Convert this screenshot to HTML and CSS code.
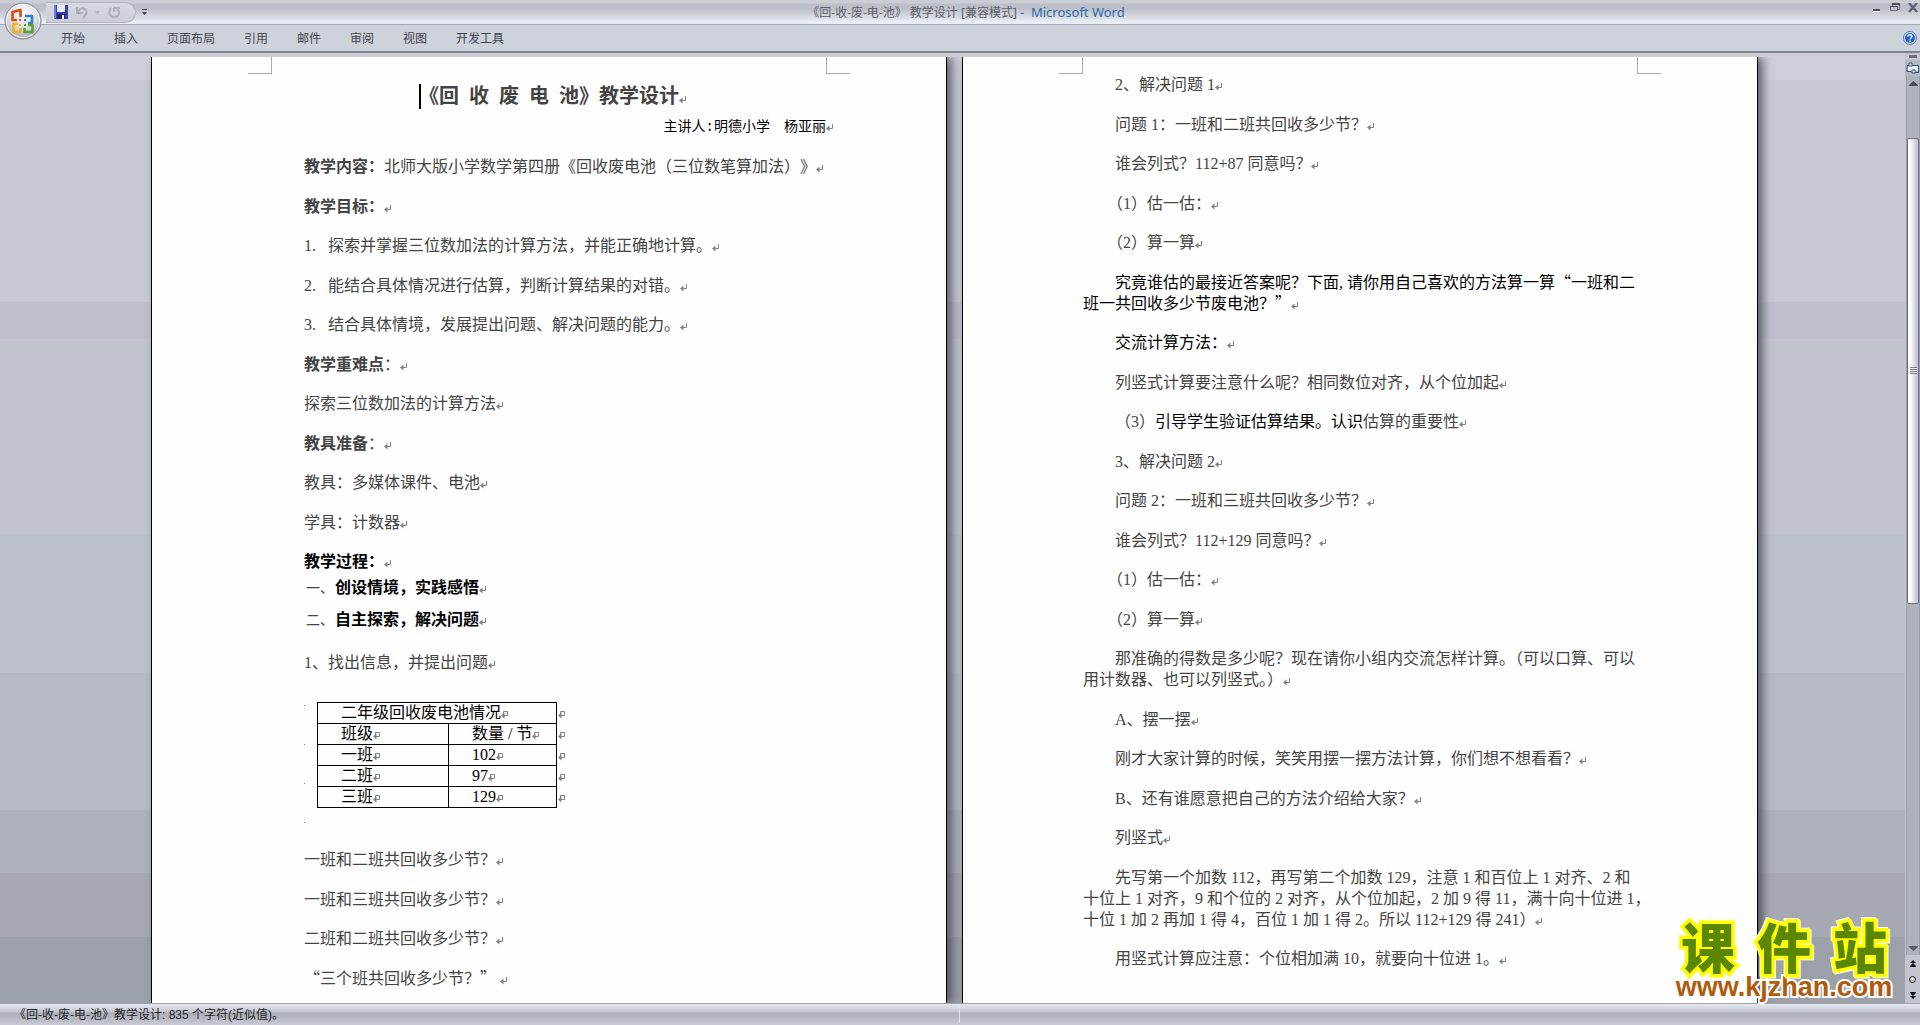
FILE: index.html
```html
<!DOCTYPE html>
<html lang="zh-CN">
<head>
<meta charset="utf-8">
<title>《回-收-废-电-池》教学设计 - Microsoft Word</title>
<link rel="stylesheet" href="styles.css">
</head>
<body>
<svg class="defs" width="0" height="0" aria-hidden="true">
  <symbol id="ret" viewBox="0 0 8 8"><path d="M6.5 0v4.5H2" fill="none" stroke="#808080"/><path d="M0 4.5L3.5 1.5v6z" fill="#808080"/></symbol>
  <symbol id="cell" viewBox="0 0 8 8"><path d="M2.5 3V.5h4v4H3" fill="none" stroke="#808080"/><path d="M0 4.5L3.5 1.5v6z" fill="#808080"/></symbol>
</svg>

<header class="titlebar">
  <div class="quick">
    <div class="pill">
      <button class="ico" aria-label="保存"><svg width="14" height="14" viewBox="0 0 14 14"><path d="M0 0h14v14H1L0 13z" fill="#3a3fae"/><path d="M0 0h2v13H0z" fill="#6f78dc"/><path d="M3 0h8v7H3z" fill="#e8ecfa"/><path d="M3 9h8v5H3z" fill="#20246e"/><path d="M8 10h2v4H8z" fill="#fff"/></svg></button>
      <button class="ico undo" aria-label="撤消"><svg width="13" height="13" viewBox="0 0 13 13"><path d="M1 1v6h6M2 6c2-4 5-4 7-3 3 2 1 6-2 9" fill="none" stroke="#a9aebb" stroke-width="2"/></svg></button>
      <button class="ico caret" aria-label="撤消列表"><svg width="5" height="3" viewBox="0 0 5 3"><path d="M0 0h5L2.500 3z" fill="#a9aebb"/></svg></button>
      <button class="ico" aria-label="重复"><svg width="13" height="13" viewBox="0 0 13 13"><path d="M3 2C0 5 1 11 6 11s7-5 3-8M6 6V2h6" fill="none" stroke="#a9aebb" stroke-width="2"/></svg></button>
    </div>
    <button class="ico" aria-label="自定义快速访问工具栏"><svg width="5" height="6" viewBox="0 0 5 6"><path d="M0 0h5v1H0zM0 3h5L2.500 6z" fill="#3c4048"/></svg></button>
  </div>
  <h1 class="caption">《回-收-废-电-池》&nbsp;教学设计 [兼容模式] <span>- &nbsp;Microsoft Word</span></h1>
  <div class="window-buttons">
    <button class="ico" aria-label="最小化"><svg width="10" height="10" viewBox="0 0 10 10"><path d="M1 6h7v2H1z" fill="#4a4e58"/><path d="M1 8h7v1H1z" fill="#fff"/></svg></button>
    <button class="ico" aria-label="还原"><svg width="10" height="10" viewBox="0 0 10 10"><path d="M2.500 3V1.500h7v5H8M.5 3.500h7v4h-7z" fill="none" stroke="#687088"/><path d="M2 0h8v2H2zM0 3h8v1H0z" fill="#4a4e58"/></svg></button>
    <button class="ico" aria-label="关闭"><svg width="10" height="10" viewBox="0 0 10 10"><path d="M1 0l8 9M9 0L1 9" stroke="#5b6275" stroke-width="2.400"/></svg></button>
  </div>
  <button class="office" aria-label="Office 按钮"><svg width="38" height="38" viewBox="0 0 38 38">
    <defs><radialGradient id="orb" cx=".5" cy=".3" r=".7"><stop offset="0" stop-color="#fff"/><stop offset=".6" stop-color="#d9dbe0"/><stop offset="1" stop-color="#a3a7b0"/></radialGradient></defs>
    <circle cx="19" cy="19" r="18" fill="url(#orb)" stroke="#858a94"/><circle cx="19" cy="19" r="16.500" fill="none" stroke="#f6f7f9"/>
    <g fill="none" stroke-width="2.600" stroke-linejoin="round">
      <path d="M13 18H8.500V10l8-2v7" stroke="#dc4a12"/><path d="M21 14h7v7h-4" stroke="#2f7fc4"/>
      <path d="M14 22H9.500v8h7v-4" stroke="#f2b21c"/><path d="M24 23h4.500v7h-8v-4" stroke="#5aa32e"/></g>
    <path d="M15 17h2v2h-2z" fill="#dc4a12"/><path d="M20 17h2v2h-2z" fill="#2f7fc4"/><path d="M15 22h2v2h-2z" fill="#f2b21c"/><path d="M20 22h2v2h-2z" fill="#5aa32e"/>
  </svg></button>
</header>

<nav class="tabs">
  <button>开始</button><button>插入</button><button>页面布局</button><button>引用</button><button>邮件</button><button>审阅</button><button>视图</button><button>开发工具</button>
  <button class="help" aria-label="帮助"><svg width="14" height="14" viewBox="0 0 14 14"><circle cx="7" cy="7" r="6.500" fill="#dbe9fa" stroke="#4a78b4"/><circle cx="7" cy="7" r="5" fill="#1f5fd8"/><path d="M5 5.500c0-2.500 4-2.500 4 0C9 7 7 7 7 8.500M7 9.500V11" fill="none" stroke="#fff" stroke-width="1.500"/></svg></button>
</nav>

<main class="workspace">
  <div class="desk">
    <article class="page">
      <i class="crop left"></i><i class="crop right"></i>
      <h2 class="doc-title"><span class="cursor"></span>《回&nbsp; 收&nbsp; 废&nbsp; 电&nbsp; 池》教学设计<svg class="mark"><use href="#ret"/></svg></h2>
      <p class="author">主讲人:明德小学　杨亚丽<svg class="mark"><use href="#ret"/></svg></p>
      <div class="body intro">
        <p><b>教学内容：</b>北师大版小学数学第四册《回收废电池（三位数笔算加法）》<svg class="mark"><use href="#ret"/></svg></p>
        <p><b>教学目标：</b><svg class="mark"><use href="#ret"/></svg></p>
        <p><span class="num">1.</span>探索并掌握三位数加法的计算方法，并能正确地计算。<svg class="mark"><use href="#ret"/></svg></p>
        <p><span class="num">2.</span>能结合具体情况进行估算，判断计算结果的对错。<svg class="mark"><use href="#ret"/></svg></p>
        <p><span class="num">3.</span>结合具体情境，发展提出问题、解决问题的能力。<svg class="mark"><use href="#ret"/></svg></p>
        <p><b>教学重难点</b>：<svg class="mark"><use href="#ret"/></svg></p>
        <p>探索三位数加法的计算方法<svg class="mark"><use href="#ret"/></svg></p>
        <p><b>教具准备</b>：<svg class="mark"><use href="#ret"/></svg></p>
        <p>教具：多媒体课件、电池<svg class="mark"><use href="#ret"/></svg></p>
        <p>学具：计数器<svg class="mark"><use href="#ret"/></svg></p>
        <p class="ink"><b>教学过程：</b><svg class="mark"><use href="#ret"/></svg></p>
      </div>
      <div class="steps">
        <p><span class="step-no">一、</span><b>创设情境，实践感悟</b><svg class="mark"><use href="#ret"/></svg></p>
        <p><span class="step-no">二、</span><b>自主探索，解决问题</b><svg class="mark"><use href="#ret"/></svg></p>
      </div>
      <p class="task">1、找出信息，并提出问题<svg class="mark"><use href="#ret"/></svg></p>
      <div class="figure">
        <div class="dots"><i></i><i></i><i></i><i></i></div>
        <table>
          <tr><td colspan="2">二年级回收废电池情况<svg class="mark"><use href="#cell"/></svg></td><td class="end"><svg class="mark"><use href="#cell"/></svg></td></tr>
          <tr><td class="c1">班级<svg class="mark"><use href="#cell"/></svg></td><td class="c2">数量 / 节<svg class="mark"><use href="#cell"/></svg></td><td class="end"><svg class="mark"><use href="#cell"/></svg></td></tr>
          <tr><td>一班<svg class="mark"><use href="#cell"/></svg></td><td>102<svg class="mark"><use href="#cell"/></svg></td><td class="end"><svg class="mark"><use href="#cell"/></svg></td></tr>
          <tr><td>二班<svg class="mark"><use href="#cell"/></svg></td><td>97<svg class="mark"><use href="#cell"/></svg></td><td class="end"><svg class="mark"><use href="#cell"/></svg></td></tr>
          <tr><td>三班<svg class="mark"><use href="#cell"/></svg></td><td>129<svg class="mark"><use href="#cell"/></svg></td><td class="end"><svg class="mark"><use href="#cell"/></svg></td></tr>
        </table>
      </div>
      <div class="body">
        <p>一班和二班共回收多少节？<svg class="mark"><use href="#ret"/></svg></p>
        <p>一班和三班共回收多少节？<svg class="mark"><use href="#ret"/></svg></p>
        <p>二班和二班共回收多少节？<svg class="mark"><use href="#ret"/></svg></p>
        <p class="quoted"><span class="quote">“</span>三个班共回收多少节？<span class="quote">”</span> <svg class="mark"><use href="#ret"/></svg></p>
      </div>
    </article>

    <article class="page second">
      <i class="crop left"></i><i class="crop right"></i>
      <div class="body">
        <p>2、解决问题 1<svg class="mark"><use href="#ret"/></svg></p>
        <p>问题 1：一班和二班共回收多少节？<svg class="mark"><use href="#ret"/></svg></p>
        <p>谁会列式？112+87 同意吗？<svg class="mark"><use href="#ret"/></svg></p>
        <p class="paren">（1）估一估：<svg class="mark"><use href="#ret"/></svg></p>
        <p class="paren">（2）算一算<svg class="mark"><use href="#ret"/></svg></p>
        <p class="ink">究竟谁估的最接近答案呢？下面, 请你用自己喜欢的方法算一算<span class="quote">“</span>一班和二<br>班一共回收多少节废电池？<span class="quote">”</span><svg class="mark"><use href="#ret"/></svg></p>
        <p class="ink">交流计算方法：<svg class="mark"><use href="#ret"/></svg></p>
        <p>列竖式计算要注意什么呢？相同数位对齐，从个位加起<svg class="mark"><use href="#ret"/></svg></p>
        <p>（3）<span class="ink">引导学生验证估算结果。认识</span>估算的重要性<svg class="mark"><use href="#ret"/></svg></p>
        <p>3、解决问题 2<svg class="mark"><use href="#ret"/></svg></p>
        <p>问题 2：一班和三班共回收多少节？<svg class="mark"><use href="#ret"/></svg></p>
        <p>谁会列式？112+129 同意吗？<svg class="mark"><use href="#ret"/></svg></p>
        <p class="paren">（1）估一估：<svg class="mark"><use href="#ret"/></svg></p>
        <p class="paren">（2）算一算<svg class="mark"><use href="#ret"/></svg></p>
        <p class="tight">那准确的得数是多少呢？现在请你小组内交流怎样计算。（可以口算、可以<br>用计数器、也可以列竖式。）<svg class="mark"><use href="#ret"/></svg></p>
        <p>A、摆一摆<svg class="mark"><use href="#ret"/></svg></p>
        <p>刚才大家计算的时候，笑笑用摆一摆方法计算，你们想不想看看？<svg class="mark"><use href="#ret"/></svg></p>
        <p>B、还有谁愿意把自己的方法介绍给大家？<svg class="mark"><use href="#ret"/></svg></p>
        <p>列竖式<svg class="mark"><use href="#ret"/></svg></p>
        <p>先写第一个加数 112，再写第二个加数 129，注意 1 和百位上 1 对齐、2 和<br>十位上 1 对齐，9 和个位的 2 对齐，从个位加起，2 加 9 得 11，满十向十位进 1，<br>十位 1 加 2 再加 1 得 4，百位 1 加 1 得 2。所以 112+129 得 241）<svg class="mark"><use href="#ret"/></svg></p>
        <p>用竖式计算应注意：个位相加满 10，就要向十位进 1。<svg class="mark"><use href="#ret"/></svg></p>
      </div>
    </article>
  </div>

  <div class="scroll">
    <i class="split"></i>
    <button class="ico ruler" aria-label="标尺"><svg width="13" height="12" viewBox="0 0 13 12"><path d="M1 3.500h3M6 3.500h6.500v7H9M5 9.500H1v-6" fill="none" stroke="#2f4a78"/><path d="M2 4h10v5H2z" fill="#eef0f8"/><path d="M3 1h3v3H3zM6 8h3v3H6z" fill="#fff" stroke="#2f4a78"/></svg></button>
    <div class="track">
      <button class="ico arrow" aria-label="向上滚动"><svg width="9" height="5" viewBox="0 0 9 5"><path d="M4.500 0L9 4v1H0V4z" fill="#4a4e56"/></svg></button>
      <div class="thumb"><i></i></div>
      <button class="ico arrow" aria-label="向下滚动"><svg width="9" height="5" viewBox="0 0 9 5"><path d="M0 0h9v1L4.500 5 0 1z" fill="#5a5e68"/></svg></button>
    </div>
    <div class="browse">
      <button class="ico" aria-label="前一页"><svg width="6" height="7" viewBox="0 0 6 7"><path d="M3 0l3 3H0zM3 3l3 3H0zM0 6h6v1H0z" fill="#111"/></svg></button>
      <button class="ico" aria-label="选择浏览对象"><svg width="7" height="7" viewBox="0 0 7 7"><circle cx="3.500" cy="3.500" r="3" fill="#c8ccc8" stroke="#222"/><circle cx="2.800" cy="2.800" r="1" fill="#fff"/></svg></button>
      <button class="ico" aria-label="下一页"><svg width="6" height="7" viewBox="0 0 6 7"><path d="M0 0h6v1H0zM0 1h6L3 4zM0 4h6L3 7z" fill="#111"/></svg></button>
    </div>
  </div>
</main>

<footer class="status">
  <span>《回-收-废-电-池》教学设计: 835 个字符(近似值)。</span>
  <span class="status-end"></span>
</footer>

<div class="watermark">
  <div class="brand"><span>课</span><span>件</span><span>站</span></div>
  <div class="url">www.kjzhan.com</div>
</div>
</body>
</html>
```
FILE: styles.css
```css
* { box-sizing: border-box; }

body {
  margin: 0;
  height: 100vh;
  display: grid;
  grid-template-rows: 25px 28px 1fr 22px;
  overflow: hidden;
  position: relative;
  font: 12px "Liberation Sans", "Noto Sans CJK SC", sans-serif;
  color: #3f434d;
  background: #c8cad2;
}

button {
  border: 0;
  padding: 0;
  background: none;
  font: inherit;
  color: inherit;
}

.defs { position: absolute; }
.ico { display: flex; align-items: center; justify-content: center; }

/* title bar */
.titlebar {
  display: grid;
  grid-template-columns: 154px 1fr 142px;
  align-items: center;
  position: relative;
  background: linear-gradient(#cacdd5 0 3px, #bcbfc9 4px 9px, #c8cbd3 12px, #dadde3 18px, #e8ecf5 21px);
  border-bottom: 1px solid #a4a7b0;
}
.quick { display: flex; align-items: center; gap: 6px; padding-left: 46px; }
.pill {
  display: flex;
  align-items: center;
  gap: 8px;
  width: 90px;
  height: 21px;
  padding-left: 8px;
  border: 1px solid #b0b3bd;
  border-left: 0;
  border-radius: 0 11px 11px 0;
  background: linear-gradient(#d6d9e0, #cbced6);
}
.caret { width: 6px; margin-left: -3px; }
.caption {
  margin: 0;
  text-align: center;
  font: 12px/20px "Noto Sans", "Noto Sans CJK SC", sans-serif;
  color: #5b606b;
  white-space: nowrap;
}
.caption span { font-size: 13px; color: #2f68a8; }
.window-buttons { display: flex; justify-content: flex-end; gap: 8px; padding: 0 2px 8px 0; }
.office { position: absolute; left: 4px; top: 2px; width: 38px; height: 38px; z-index: 2; }

/* ribbon tabs */
.tabs {
  display: flex;
  align-items: center;
  gap: 29px;
  padding: 0 3px 1px 61px;
  background: #ced2db;
  border-bottom: 2px solid #80848e;
}
.help { margin-left: auto; display: flex; }

/* document area */
.workspace {
  display: grid;
  grid-template-columns: 1fr 15px;
  min-height: 0;
  background: #d0ced8;
}
.desk {
  display: grid;
  grid-template-columns: auto auto;
  justify-content: center;
  gap: 15px;
  margin-top: 4px;
  padding-left: 4px;
  min-height: 0;
  overflow: hidden;
  background: linear-gradient(#d0ced8 0 23px, #c7cad3 23px 245px, #c0becd 245px 282px, #c1c4cd 282px 477px, #bbc0c9 477px 616px, #b6bac4 616px 753px, #adb1ba 753px 816px, #a6a9b2 816px 880px, #9ca1a9 880px);
}
.page {
  position: relative;
  width: 796px;
  padding: 25px 120px 0;
  background: #fefefe;
  border: solid #000;
  border-width: 0 1px;
  box-shadow: 5px 0 9px rgba(50, 54, 62, .7);
  font: 16px/21px "Liberation Serif", "Noto Sans CJK SC", serif;
  color: #444;
  white-space: nowrap;
  text-spacing-trim: space-all;
}
.page.second { padding-top: 17px; }
.page p { margin: 0; text-indent: 2em; }
.crop {
  position: absolute;
  top: 0;
  width: 24px;
  height: 17px;
  border: 0 solid #a8aab4;
  border-bottom-width: 1px;
}
.crop.left { left: 96px; border-right-width: 1px; }
.crop.right { right: 96px; border-left-width: 1px; }

.mark { width: 8px; height: 8px; margin-right: -8px; vertical-align: -1px; }
.ink, .steps b, .page .ink { color: #000; }
.quote { font-family: "Noto Sans CJK SC", sans-serif; line-height: 16px; }

.doc-title { margin: 0 0 7px; font-size: 20px; line-height: 28px; text-align: center; }
.cursor {
  display: inline-block;
  width: 2px;
  height: 25px;
  margin-right: -2px;
  vertical-align: -6px;
  background: #000;
}
.page .author {
  text-align: right;
  text-indent: 0;
  font-family: "Liberation Mono", "Noto Sans CJK SC", sans-serif;
  font-size: 14px;
  color: #000;
  margin-bottom: 18px;
}
.body p:nth-child(odd) { margin-bottom: 19px; }
.body p:nth-child(even) { margin-bottom: 18px; }
.body p:last-child { margin-bottom: 0; }
.num { display: inline-block; width: 24px; text-indent: 0; }
.paren { text-spacing-trim: trim-start; }
.tight { text-spacing-trim: normal; }

.steps { display: grid; gap: 10px; padding: 5px 0 0 2px; }
.step-no { display: inline-block; width: 29px; text-indent: 0; font-size: 14px; }
.page .task { margin: 21px 0 29px; }

.figure { display: flex; align-items: flex-start; gap: 12px; padding-left: 32px; margin-bottom: 25px; }
.dots { display: flex; flex-direction: column; justify-content: space-between; height: 122px; padding: 3px 0 1px; }
.dots i { width: 1px; height: 1px; background: #777; }

table { border-collapse: collapse; color: #000; line-height: 20px; }
td { height: 21px; padding: 0 0 0 23px; border: 1px solid #000; }
.c1 { width: 131px; }
.c2 { width: 108px; }
td.end { border: 0; padding-left: 1px; }

/* vertical scroll bar */
.scroll { display: flex; flex-direction: column; align-items: stretch; background: #c4c7cf; }
.split { width: 8px; height: 3px; margin: 2px auto; background: #6c7078; }
.ruler { height: 16px; background: #b4b9c0; }
.track {
  flex: 1;
  display: flex;
  flex-direction: column;
  margin-left: 1px;
  border: 1px solid #999da6;
  border-width: 0 1px;
  background: #aeb2bb;
}
.arrow { height: 14px; }
.thumb {
  flex: 0 0 53%;
  margin-top: 48px;
  display: flex;
  align-items: center;
  justify-content: center;
  border: 1px solid #6c7078;
  border-radius: 2px;
  background: linear-gradient(90deg, #fff 0 3px, #e8e8f2 4px 6px, #cbced7 7px 9px, #bdc1ca 10px);
}
.thumb i { width: 7px; height: 7px; background: repeating-linear-gradient(#7c808a 0 1px, #e8e8ee 1px 2px); }
.thumb + .arrow { margin-top: auto; }
.browse { display: flex; flex-direction: column; justify-content: space-around; height: 48px; background: #c2c5cf; }

/* status bar */
.status {
  display: grid;
  grid-template-columns: 1fr 1fr;
  align-items: center;
  padding: 0 0 2px 14px;
  color: #222;
  border-top: 1px solid #a0a2aa;
  background: linear-gradient(#e6e9f1 0, #d0d3dc 5px, #bfc2cb 8px, #adb0ba 9px, #b6b9c3 14px, #c8cbd6);
}
.status-end { height: 18px; border-left: 1px solid #dfe2e9; margin-left: -8px; }

/* site watermark over the lower right corner */
.watermark { position: absolute; right: 22px; bottom: 24px; width: 228px; }
.brand {
  display: flex;
  justify-content: space-around;
  font: 900 54px/54px "Noto Sans CJK SC", sans-serif;
  color: #5a8600;
  -webkit-text-stroke: 7px #ffff00;
  paint-order: stroke fill;
  filter: drop-shadow(1px 1px 0 #fff) drop-shadow(-1px -1px 0 #fff);
}
.url {
  font: bold 27px/28px "Liberation Sans", sans-serif;
  text-align: center;
  color: #b05a0c;
  -webkit-text-stroke: 4px #fff;
  paint-order: stroke fill;
}
```
